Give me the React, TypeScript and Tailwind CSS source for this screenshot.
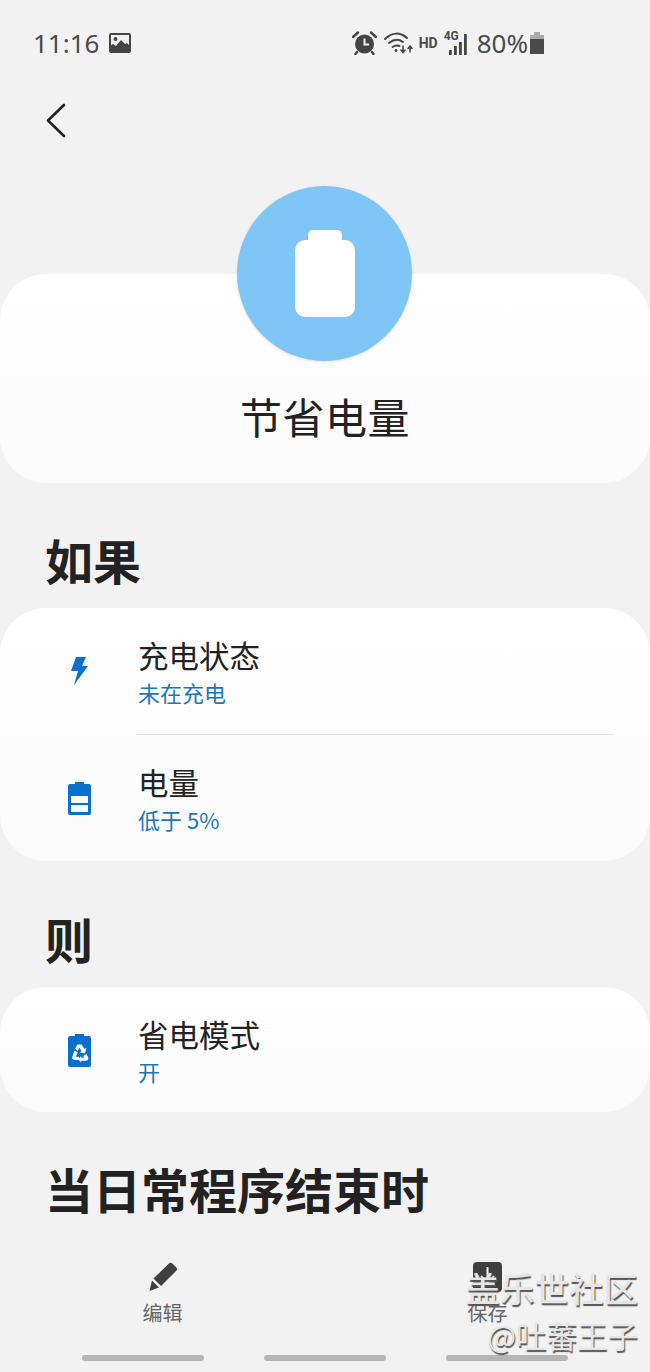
import React from "react";

const cjk = "font-['Noto_Sans_CJK_SC','Noto_Sans',sans-serif]";

function StatusBar() {
  return (
    <div className="flex h-[85px] items-center pl-[33px] pr-[105px] text-[#4a4a4a]">
      <span className="font-['Noto_Sans',sans-serif] text-[26px] leading-none">11:16</span>
      <svg className="ml-[10px]" width="22" height="20" viewBox="0 0 22 20">
        <rect width="22" height="20" rx="2" fill="#444" />
        <rect x="2" y="2" width="18" height="16" fill="#f2f2f2" />
        <circle cx="6.500" cy="6" r="2" fill="#444" />
        <path d="M1 18V13l3-2 3 2 5-6 4 4 2-1 3 3v5z" fill="#444" />
      </svg>
      <div className="ml-auto flex items-center">
        <svg width="25" height="24" viewBox="0 0 25 24" fill="#444">
          <circle cx="12.500" cy="13" r="9.500" />
          <path d="M12.500 7.500V13.500H17" stroke="#f2f2f2" strokeWidth="2" fill="none" />
          <path d="M1 6 6 1.500M24 6 19 1.500M5 21 3.500 23M20 21l1.500 2" stroke="#444" strokeWidth="2.400" strokeLinecap="round" />
        </svg>
        <svg className="ml-[7px]" width="29" height="24" viewBox="0 0 29 24" fill="none" stroke="#444" strokeWidth="2" strokeLinecap="round">
          <path d="M1 8C8 1 16 1 23 7" />
          <path d="M5 12c5-4 10-4 14-1" />
          <path d="M8.500 16c3-2 5-2 7-1" />
          <circle cx="12" cy="19.500" r="1.400" fill="#444" stroke="none" />
          <path d="M19 15v6M17 19l2 2.500 2-2.500M26 21v-6M24 17.500l2-2.500 2 2.500" strokeWidth="1.600" />
        </svg>
        <span className="ml-[6px] font-['Roboto',sans-serif] text-[14px] font-bold leading-none">HD</span>
        <div className="relative ml-[6px] h-[24px] w-[25px]">
          <span className="absolute left-0 top-[-1px] font-['Roboto',sans-serif] text-[12px] font-bold leading-none">4G</span>
          <svg className="absolute left-0 top-0" width="25" height="24" viewBox="0 0 25 24" fill="#444">
            <rect x="5" y="19" width="2.800" height="5" />
            <rect x="10" y="15" width="2.800" height="9" />
            <rect x="15" y="11" width="2.800" height="13" />
            <rect x="20" y="3" width="2.800" height="21" />
          </svg>
        </div>
        <span className="ml-[8px] font-['Noto_Sans',sans-serif] text-[26px] leading-none">80%</span>
        <svg className="ml-[1px]" width="16" height="22" viewBox="0 0 16 22">
          <rect x="5" y="0" width="6" height="3" fill="#aaa" />
          <rect x="1" y="3" width="14" height="5" fill="#aaa" />
          <rect x="1" y="7" width="14" height="15" fill="#4a4a4a" />
        </svg>
      </div>
    </div>
  );
}

function Row({ icon, title, sub }: { icon: React.ReactNode; title: string; sub: string }) {
  return (
    <div className="flex h-[126px] items-center">
      <div className="flex w-[138px] shrink-0 pl-[68px]">{icon}</div>
      <div>
        <div className="text-[30.500px] leading-[38px] text-[#222]">{title}</div>
        <div className="mt-[4px] text-[22px] leading-[28px] text-[#1b78b8]">{sub}</div>
      </div>
    </div>
  );
}

function Heading({ children, className }: { children: string; className?: string }) {
  return <div className={`pl-[45px] text-[48px] font-bold leading-[60px] text-[#222] ${className ?? ""}`}>{children}</div>;
}

export default function App() {
  return (
    <div className={`relative flex h-[1372px] w-[650px] flex-col overflow-hidden bg-[#f2f2f2] ${cjk}`}>
      <StatusBar />

      <div className="h-[101px] pl-[46px] pt-[18px]">
        <svg width="20" height="35" viewBox="0 0 20 35" fill="none" stroke="#222" strokeWidth="2.600" strokeLinecap="round" strokeLinejoin="round">
          <path d="M18 2 2 17.500 18 33" />
        </svg>
      </div>

      <div className="relative z-10 ml-[237px] flex h-[175px] w-[175px] shrink-0 items-center justify-center rounded-full bg-[#7fc5f6] shadow-[0_1px_3px_rgba(0,0,0,0.12)]">
        <svg width="60" height="87" viewBox="0 0 60 87" fill="#fff">
          <rect x="13" y="0" width="34" height="20" rx="5" />
          <rect x="0" y="10" width="60" height="77" rx="10" />
        </svg>
      </div>

      <div className="-mt-[87px] flex h-[209px] shrink-0 items-end justify-center rounded-[46px] bg-gradient-to-b from-[#fefefe] to-[#fbfbfb] pb-[39px]">
        <span className="text-[42px] leading-[56px] tracking-[0.500px] text-[#222]">节省电量</span>
      </div>

      <Heading className="mt-[46px]">如果</Heading>

      <div className="mt-[19px] h-[253px] shrink-0 rounded-[46px] bg-gradient-to-b from-[#fefefe] to-[#fbfbfb]">
        <Row
          title="充电状态"
          sub="未在充电"
          icon={
            <svg className="ml-[2px]" width="18" height="28" viewBox="0 0 18 28" fill="#0b6fcc">
              <path d="M6 0h10l-4 9h6L4 28l4-14H1z" />
            </svg>
          }
        />
        <div className="ml-[137px] mr-[36px] h-px bg-[#e2e2e2]" />
        <Row
          title="电量"
          sub="低于 5%"
          icon={
            <svg width="23" height="33" viewBox="0 0 23 33">
              <path d="M7 0h9v2h5a2 2 0 0 1 2 2v27a2 2 0 0 1-2 2H2a2 2 0 0 1-2-2V4a2 2 0 0 1 2-2h5z" fill="#0b6fcc" />
              <rect x="3" y="14" width="17" height="7" fill="#fff" />
              <rect x="3" y="23" width="17" height="7" fill="#fff" />
            </svg>
          }
        />
      </div>

      <Heading className="mt-[47px]">则</Heading>

      <div className="mt-[19px] h-[125px] shrink-0 rounded-[46px] bg-gradient-to-b from-[#fefefe] to-[#fbfbfb]">
        <Row
          title="省电模式"
          sub="开"
          icon={
            <svg width="23" height="33" viewBox="0 0 23 33">
              <path d="M7 0h9v2h5a2 2 0 0 1 2 2v27a2 2 0 0 1-2 2H2a2 2 0 0 1-2-2V4a2 2 0 0 1 2-2h5z" fill="#0b6fcc" />
              <path d="M7 14.500 9.500 10.500h4l3 4.500 1.800-1-1.300 5.500-5.300-1.300 1.800-1-2-3.500-2 3.300z" fill="#fff" />
              <path d="M6.500 16.500l3.300 2-2.300 4.200h3.500v3.300H6.500c-2 0-3-2-2-3.700z" fill="#fff" />
              <path d="M18.500 20l-3.300 2 1 1.800h-3V22l-3 3.200 3 3.300v-1.800h4.800c2 0 3-2 2-3.700z" fill="#fff" />
            </svg>
          }
        />
      </div>

      <Heading className="mt-[46px]">当日常程序结束时</Heading>

      <div className="mt-auto">
        <div className="flex pl-[142px] pr-[142px]">
          <div className="flex w-[41px] flex-col items-center">
            <svg width="30" height="30" viewBox="0 0 30 30" fill="#3f3f3f">
              <path d="M21 1.500a2.500 2.500 0 0 1 3.300 0l4 4a2.500 2.500 0 0 1 0 3.300L13 24l-7.500-7.500z" />
              <path d="M4 18.500 11 25.500 1.500 29z" />
            </svg>
            <span className="mt-[7px] whitespace-nowrap text-[20px] leading-[27px] text-[#666]">编辑</span>
          </div>
          <div className="ml-auto flex w-[41px] flex-col items-center">
            <svg width="29" height="30" viewBox="0 0 29 30">
              <rect width="29" height="30" rx="4" fill="#3f3f3f" />
              <path d="M14.500 5v14M8 14l6.500 6.500L21 14" stroke="#f2f2f2" strokeWidth="2" fill="none" />
            </svg>
            <span className="mt-[7px] whitespace-nowrap text-[20px] leading-[27px] text-[#666]">保存</span>
          </div>
        </div>
        <div className="mb-[11px] mt-[29px] flex gap-[60px] pl-[82px]">
          <div className="h-[6px] w-[122px] rounded-full bg-[#b5b5b5]" />
          <div className="h-[6px] w-[122px] rounded-full bg-[#b5b5b5]" />
          <div className="h-[6px] w-[122px] rounded-full bg-[#b5b5b5]" />
        </div>
      </div>

      {/* watermark sits over the save button */}
      <div className="absolute bottom-[18px] right-[12px] z-20 flex flex-col items-end text-[#e6e6e6] [text-shadow:1px_2px_1px_#555]">
        <span className="text-[34.500px] font-medium leading-[42px]">盖乐世社区</span>
        <span className="mt-[8px] text-[30.500px] leading-[38px]">@吐蕃王子</span>
      </div>
    </div>
  );
}
